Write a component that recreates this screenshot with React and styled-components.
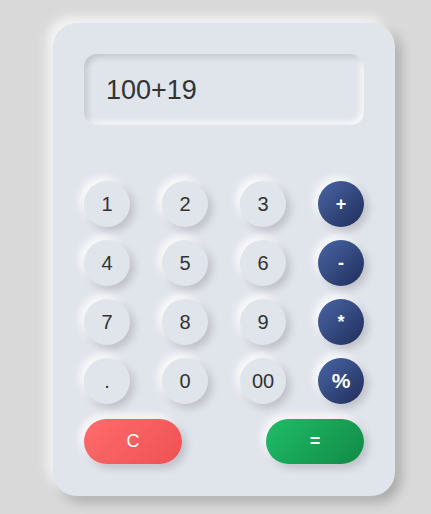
import React, { useState } from "react";
import styled, { createGlobalStyle } from "styled-components";

const GlobalStyle = createGlobalStyle`
    body {
        margin: 0;
        background: #d9d9d9;
        font-family: "Liberation Sans", Arial, sans-serif;
    }
`;

const Page = styled.div`
    padding: 23px 0 0 53px;
    min-height: 514px;
    box-sizing: border-box;
`;

const Card = styled.div`
    width: 342px;
    height: 473px;
    box-sizing: border-box;
    padding: 31px 31px 32px;
    background: #e0e4eb;
    border-radius: 24px;
    box-shadow: -6px -6px 12px rgba(255, 255, 255, 0.75),
        6px 6px 12px rgba(0, 0, 0, 0.22);
    display: flex;
    flex-direction: column;
`;

const Display = styled.div`
    height: 71px;
    box-sizing: border-box;
    border-radius: 13px;
    padding: 2px 22px 0;
    display: flex;
    align-items: center;
    font-size: 27px;
    color: #333;
    background: #e0e4eb;
    box-shadow: inset 3px 3px 6px rgba(0, 0, 0, 0.14),
        inset -3px -3px 6px rgba(255, 255, 255, 0.85);
`;

const Keys = styled.div`
    margin-top: 56px;
    display: grid;
    grid-template-columns: repeat(4, 46px);
    column-gap: 32px;
    row-gap: 13px;
`;

const Key = styled.button`
    width: 46px;
    height: 46px;
    border: none;
    border-radius: 50%;
    padding: 0;
    font-family: inherit;
    cursor: pointer;
    background: ${p => (p.$op ? "linear-gradient(135deg, #4a66a6, #1f2d5a)" : "#e0e4eb")};
    color: ${p => (p.$op ? "#fff" : "#333")};
    font-size: ${p => (p.$op ? (p.$big ? "21px" : "18px") : "20px")};
    font-weight: ${p => (p.$op ? 700 : 400)};
    box-shadow: 4px 4px 8px rgba(0, 0, 0, 0.16),
        -4px -4px 8px rgba(255, 255, 255, 0.9);
`;

const Actions = styled.div`
    margin-top: 15px;
    display: flex;
    justify-content: space-between;
`;

const Wide = styled.button`
    width: 98px;
    height: 45px;
    border: none;
    border-radius: 23px;
    font-family: inherit;
    font-size: 18px;
    font-weight: ${p => (p.$bold ? 700 : 400)};
    color: #fff;
    cursor: pointer;
    background: ${p => p.$bg};
    box-shadow: 4px 4px 8px rgba(0, 0, 0, 0.16),
        -4px -4px 8px rgba(255, 255, 255, 0.9);
`;

const rows = [
    ["1", "2", "3", "+"],
    ["4", "5", "6", "-"],
    ["7", "8", "9", "*"],
    [".", "0", "00", "%"],
];

export default function App() {
    const [expr, setExpr] = useState("100+19");

    const press = k => setExpr(e => e + k);

    return (
        <>
            <GlobalStyle />
            <Page>
                <Card>
                    <Display>{expr}</Display>
                    <Keys>
                        {rows.flat().map((k, i) => (
                            <Key
                                key={k}
                                $op={i % 4 === 3}
                                $big={k === "%"}
                                onClick={() => press(k)}
                            >
                                {k}
                            </Key>
                        ))}
                    </Keys>
                    <Actions>
                        <Wide $bg="linear-gradient(135deg, #ff6b6b, #ee5253)" onClick={() => setExpr("")}>
                            C
                        </Wide>
                        <Wide $bold $bg="linear-gradient(135deg, #1fbd68, #118a46)">
                            =
                        </Wide>
                    </Actions>
                </Card>
            </Page>
        </>
    );
}
